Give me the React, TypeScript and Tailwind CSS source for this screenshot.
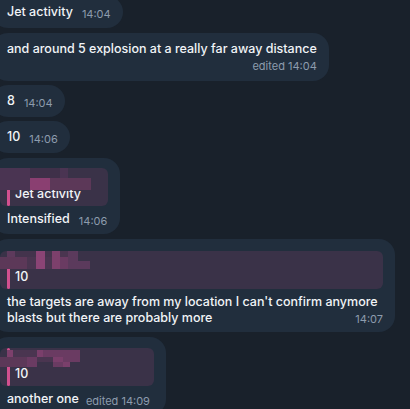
type Cell = string;

const mosaicA: Cell[] = [
  'left-[0px] top-[0px] w-[30px] h-[22px] bg-[#4a3452]',
  'left-[30px] top-[0px] w-[30px] h-[10px] bg-[#3f3049]',
  'left-[60px] top-[0px] w-[8px] h-[10px] bg-[#4a3452]',
  'left-[30px] top-[10px] w-[20px] h-[12px] bg-[#8a3f71]',
  'left-[50px] top-[10px] w-[41px] h-[12px] bg-[#5c3858]',
];

const mosaicB: Cell[] = [
  'left-[7px] top-[0px] w-[8px] h-[6px] bg-[#5d3a5c]',
  'left-[15px] top-[0px] w-[21px] h-[6px] bg-[#43334c]',
  'left-[36px] top-[0px] w-[9px] h-[18px] bg-[#8b4475]',
  'left-[45px] top-[0px] w-[7px] h-[6px] bg-[#45344d]',
  'left-[52px] top-[0px] w-[8px] h-[18px] bg-[#7d406c]',
  'left-[60px] top-[0px] w-[8px] h-[6px] bg-[#4a3550]',
  'left-[68px] top-[0px] w-[10px] h-[18px] bg-[#5b3a5c]',
  'left-[0px] top-[6px] w-[27px] h-[12px] bg-[#5c3858]',
  'left-[27px] top-[6px] w-[9px] h-[12px] bg-[#4a3550]',
  'left-[45px] top-[6px] w-[7px] h-[12px] bg-[#4a3550]',
  'left-[60px] top-[6px] w-[8px] h-[12px] bg-[#6a3b62]',
  'left-[78px] top-[10px] w-[12px] h-[8px] bg-[#5b3a5c]',
];

const mosaicC: Cell[] = [
  'left-[7px] top-[2px] w-[6px] h-[7px] bg-[#7d406c]',
  'left-[13px] top-[2px] w-[24px] h-[7px] bg-[#4a3550]',
  'left-[37px] top-[2px] w-[6px] h-[7px] bg-[#7a3f6b]',
  'left-[43px] top-[2px] w-[37px] h-[7px] bg-[#6a3b62]',
  'left-[0px] top-[9px] w-[27px] h-[10px] bg-[#5c3858]',
  'left-[27px] top-[9px] w-[10px] h-[10px] bg-[#6a3b62]',
  'left-[37px] top-[9px] w-[16px] h-[5px] bg-[#4a3550]',
  'left-[53px] top-[9px] w-[10px] h-[5px] bg-[#7a3f6b]',
  'left-[63px] top-[9px] w-[17px] h-[5px] bg-[#6a3b62]',
  'left-[53px] top-[14px] w-[10px] h-[5px] bg-[#6a3b62]',
  'left-[63px] top-[14px] w-[7px] h-[5px] bg-[#7a3f6b]',
];

function Time({ children }: { children: React.ReactNode }) {
  return (
    <span className="text-[11px] leading-[14px] font-normal text-[#8d9cad] whitespace-nowrap">{children}</span>
  );
}

function Bubble({ children, className = '' }: { children: React.ReactNode; className?: string }) {
  return <div className={`rounded-[16px] bg-[#212e3d] pl-[15px] pr-[12px] ${className}`}>{children}</div>;
}

function InlineMsg({ text, time, className = '' }: { text: string; time: string; className?: string }) {
  return (
    <Bubble className={`py-[7px] flex items-end gap-[9px] ${className}`}>
      <span className="leading-[18px]">{text}</span>
      <Time>{time}</Time>
    </Bubble>
  );
}

function Reply({ text, width, cells }: { text: string; width: string; cells: Cell[] }) {
  return (
    <div className={`relative -ml-[7px] ${width}`}>
      <div className="flex rounded-[6px] bg-[#3a3248] pl-[7px] overflow-hidden">
        <div className="w-[3px] rounded-full bg-[#d2508f]" />
        <div className="pl-[5px] pt-[3px] pb-[4px]">
          <div className="h-[15px]" />
          <div className="leading-[16px]">{text}</div>
        </div>
      </div>
      <div className="absolute inset-0">
        {cells.map((c, i) => (
          <div key={i} className={`absolute ${c}`} />
        ))}
      </div>
    </div>
  );
}

export default function App() {
  return (
    <div className="h-[409px] w-[410px] overflow-hidden bg-[#19212b] text-[12.5px] font-medium text-[#f1f4f7] font-['Inter',sans-serif]">
      <div className="-ml-[8px] -mt-[4px] flex flex-col items-start gap-[4px]">
        <InlineMsg text="Jet activity" time="14:04" />

        <Bubble className="mt-px pt-[7px] pb-[7px]">
          <div className="leading-[18px]">and around 5 explosion at a really far away distance</div>
          <div className="flex h-[16px] items-center justify-end">
            <Time>edited 14:04</Time>
          </div>
        </Bubble>

        <InlineMsg text="8" time="14:04" />
        <InlineMsg text="10" time="14:06" />

        <Bubble className="mt-px pt-[10px] pb-[6px] pr-[11px]">
          <Reply text="Jet activity" width="w-[108px]" cells={mosaicA} />
          <div className="mt-[4px] flex items-end gap-[9px]">
            <span className="leading-[18px]">Intensified</span>
            <Time>14:06</Time>
          </div>
        </Bubble>

        <Bubble className="mt-px pt-[12px] pb-[6px] pr-[11px]">
          <Reply text="10" width="w-[383px]" cells={mosaicB} />
          <div className="mt-[5px] leading-[16px]">
            <div>the targets are away from my location I can't confirm anymore</div>
            <div className="flex items-end justify-between">
              <span>blasts but there are probably more</span>
              <Time>14:07</Time>
            </div>
          </div>
        </Bubble>

        <Bubble className="mt-px pt-[11px] pb-[7px] pr-[11px]">
          <Reply text="10" width="w-[154px]" cells={mosaicC} />
          <div className="mt-[4px] flex items-end gap-[7px]">
            <span className="leading-[18px]">another one</span>
            <Time>edited 14:09</Time>
          </div>
        </Bubble>
      </div>
    </div>
  );
}
